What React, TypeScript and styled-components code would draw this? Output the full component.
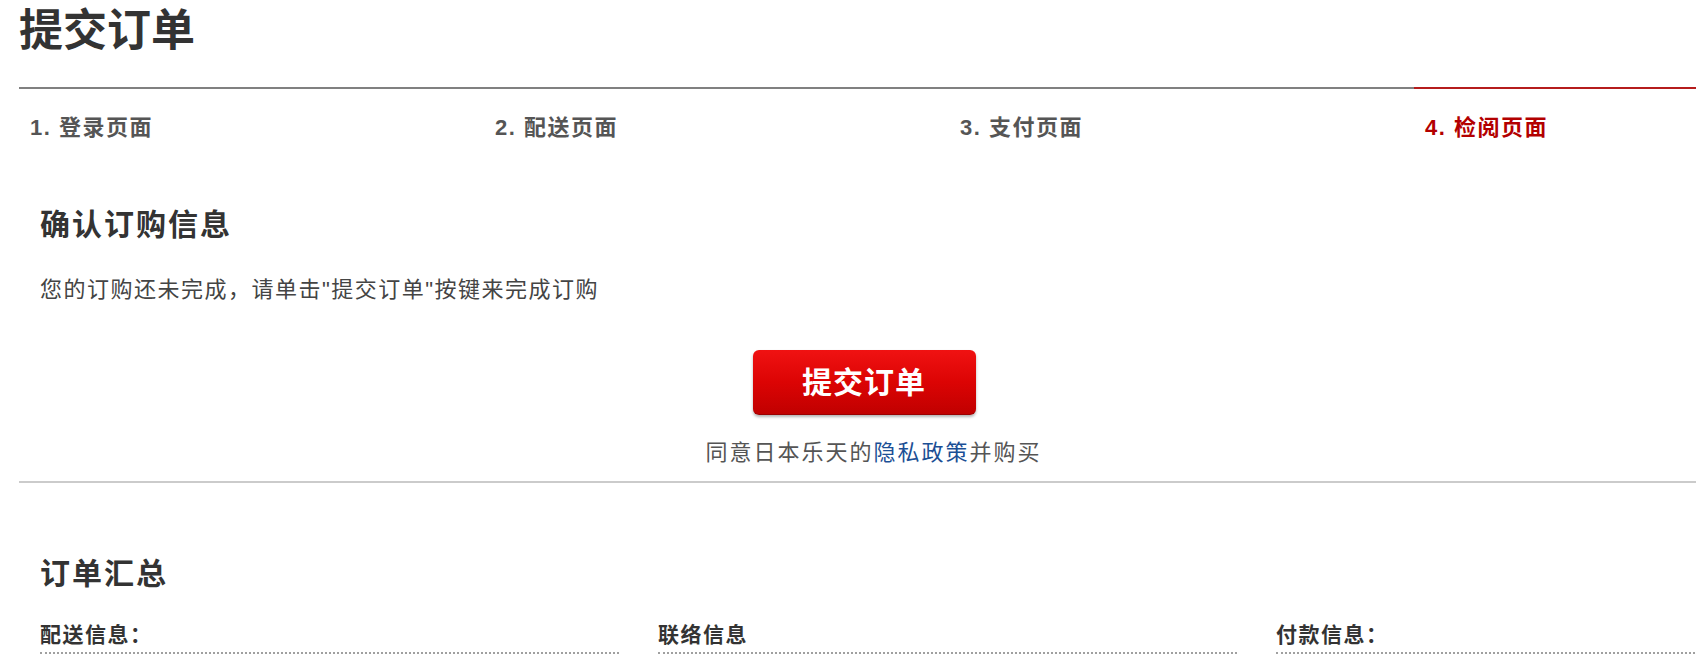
import styled, { createGlobalStyle } from "styled-components";

const GlobalStyle = createGlobalStyle`
	html, body {
		margin: 0;
		padding: 0;
		background: #fff;
		overflow: hidden;
	}
	body {
		font-family: "Liberation Sans", "Noto Sans CJK SC", sans-serif;
		color: #333;
	}
`;

const Page = styled.div`
	width: 1860px;
	padding-left: 19px;
`;

const PageTitle = styled.h1`
	margin: 0 0 25px;
	font-size: 44px;
	line-height: 62px;
	font-weight: 700;
	color: #333;
`;

const Steps = styled.ol`
	display: grid;
	grid-template-columns: repeat(4, 465px);
	list-style: none;
	margin: 0;
	padding: 0;
`;

const Step = styled.li<{ $active?: boolean }>`
	border-top: 2px solid ${({ $active }) => ($active ? "#b51c1c" : "#808080")};
	padding: 24px 0 0 11px;
	font-size: 22px;
	line-height: 30px;
	font-weight: 700;
	letter-spacing: 1.5px;
	color: ${({ $active }) => ($active ? "#b30000" : "#555")};
`;

const Confirm = styled.section`
	padding: 62px 0 0 21px;
`;

const SectionTitle = styled.h2`
	margin: 0;
	font-size: 30px;
	line-height: 40px;
	font-weight: 700;
	letter-spacing: 2px;
	color: #333;
`;

const Notice = styled.p`
	margin: 30px 0 0;
	font-size: 22px;
	line-height: 30px;
	letter-spacing: 1.5px;
	color: #444;
`;

const ActionArea = styled.div`
	width: 1690px;
	margin-left: -21px;
	display: flex;
	flex-direction: column;
	align-items: center;
`;

const SubmitButton = styled.button`
	margin-top: 45px;
	width: 223px;
	height: 65px;
	border: none;
	border-bottom: 1px solid #9a0000;
	border-radius: 6px;
	background: linear-gradient(#f01212 0%, #dc0404 50%, #c00000 100%);
	box-shadow: 0 2px 3px rgba(0, 0, 0, 0.3);
	color: #fff;
	font-family: inherit;
	font-size: 30px;
	font-weight: 700;
	letter-spacing: 1px;
	line-height: 65px;
	padding: 0;
	cursor: pointer;
`;

const Agreement = styled.p`
	margin: 23px 0 0;
	padding-left: 19px;
	font-size: 22px;
	line-height: 30px;
	letter-spacing: 2px;
	color: #555;
`;

const PolicyLink = styled.a`
	color: #1b4f95;
	text-decoration: none;
`;

const Divider = styled.hr`
	margin: 13px 0 0;
	border: none;
	height: 2px;
	background: #cbcbcb;
`;

const Summary = styled.section`
	padding: 71px 0 0 21px;
`;

const SummaryGrid = styled.div`
	display: grid;
	grid-template-columns: repeat(3, 579px);
	column-gap: 39px;
	margin-top: 26px;
`;

const InfoLabel = styled.h3`
	margin: 0;
	padding-bottom: 2px;
	border-bottom: 2px dotted #a0a0a0;
	font-size: 21px;
	line-height: 30px;
	font-weight: 700;
	letter-spacing: 1.5px;
	color: #333;
`;

export default function App() {
	const steps = ["1. 登录页面", "2. 配送页面", "3. 支付页面", "4. 检阅页面"];

	return (
		<>
			<GlobalStyle />
			<Page>
				<PageTitle>提交订单</PageTitle>
				<Steps>
					{steps.map((s, i) => (
						<Step key={s} $active={i === steps.length - 1}>
							{s}
						</Step>
					))}
				</Steps>
				<Confirm>
					<SectionTitle>确认订购信息</SectionTitle>
					<Notice>您的订购还未完成，请单击"提交订单"按键来完成订购</Notice>
					<ActionArea>
						<SubmitButton type="button">提交订单</SubmitButton>
						<Agreement>
							同意日本乐天的<PolicyLink href="#">隐私政策</PolicyLink>并购买
						</Agreement>
					</ActionArea>
				</Confirm>
				<Divider />
				<Summary>
					<SectionTitle>订单汇总</SectionTitle>
					<SummaryGrid>
						<InfoLabel>配送信息：</InfoLabel>
						<InfoLabel>联络信息</InfoLabel>
						<InfoLabel>付款信息：</InfoLabel>
					</SummaryGrid>
				</Summary>
			</Page>
		</>
	);
}
